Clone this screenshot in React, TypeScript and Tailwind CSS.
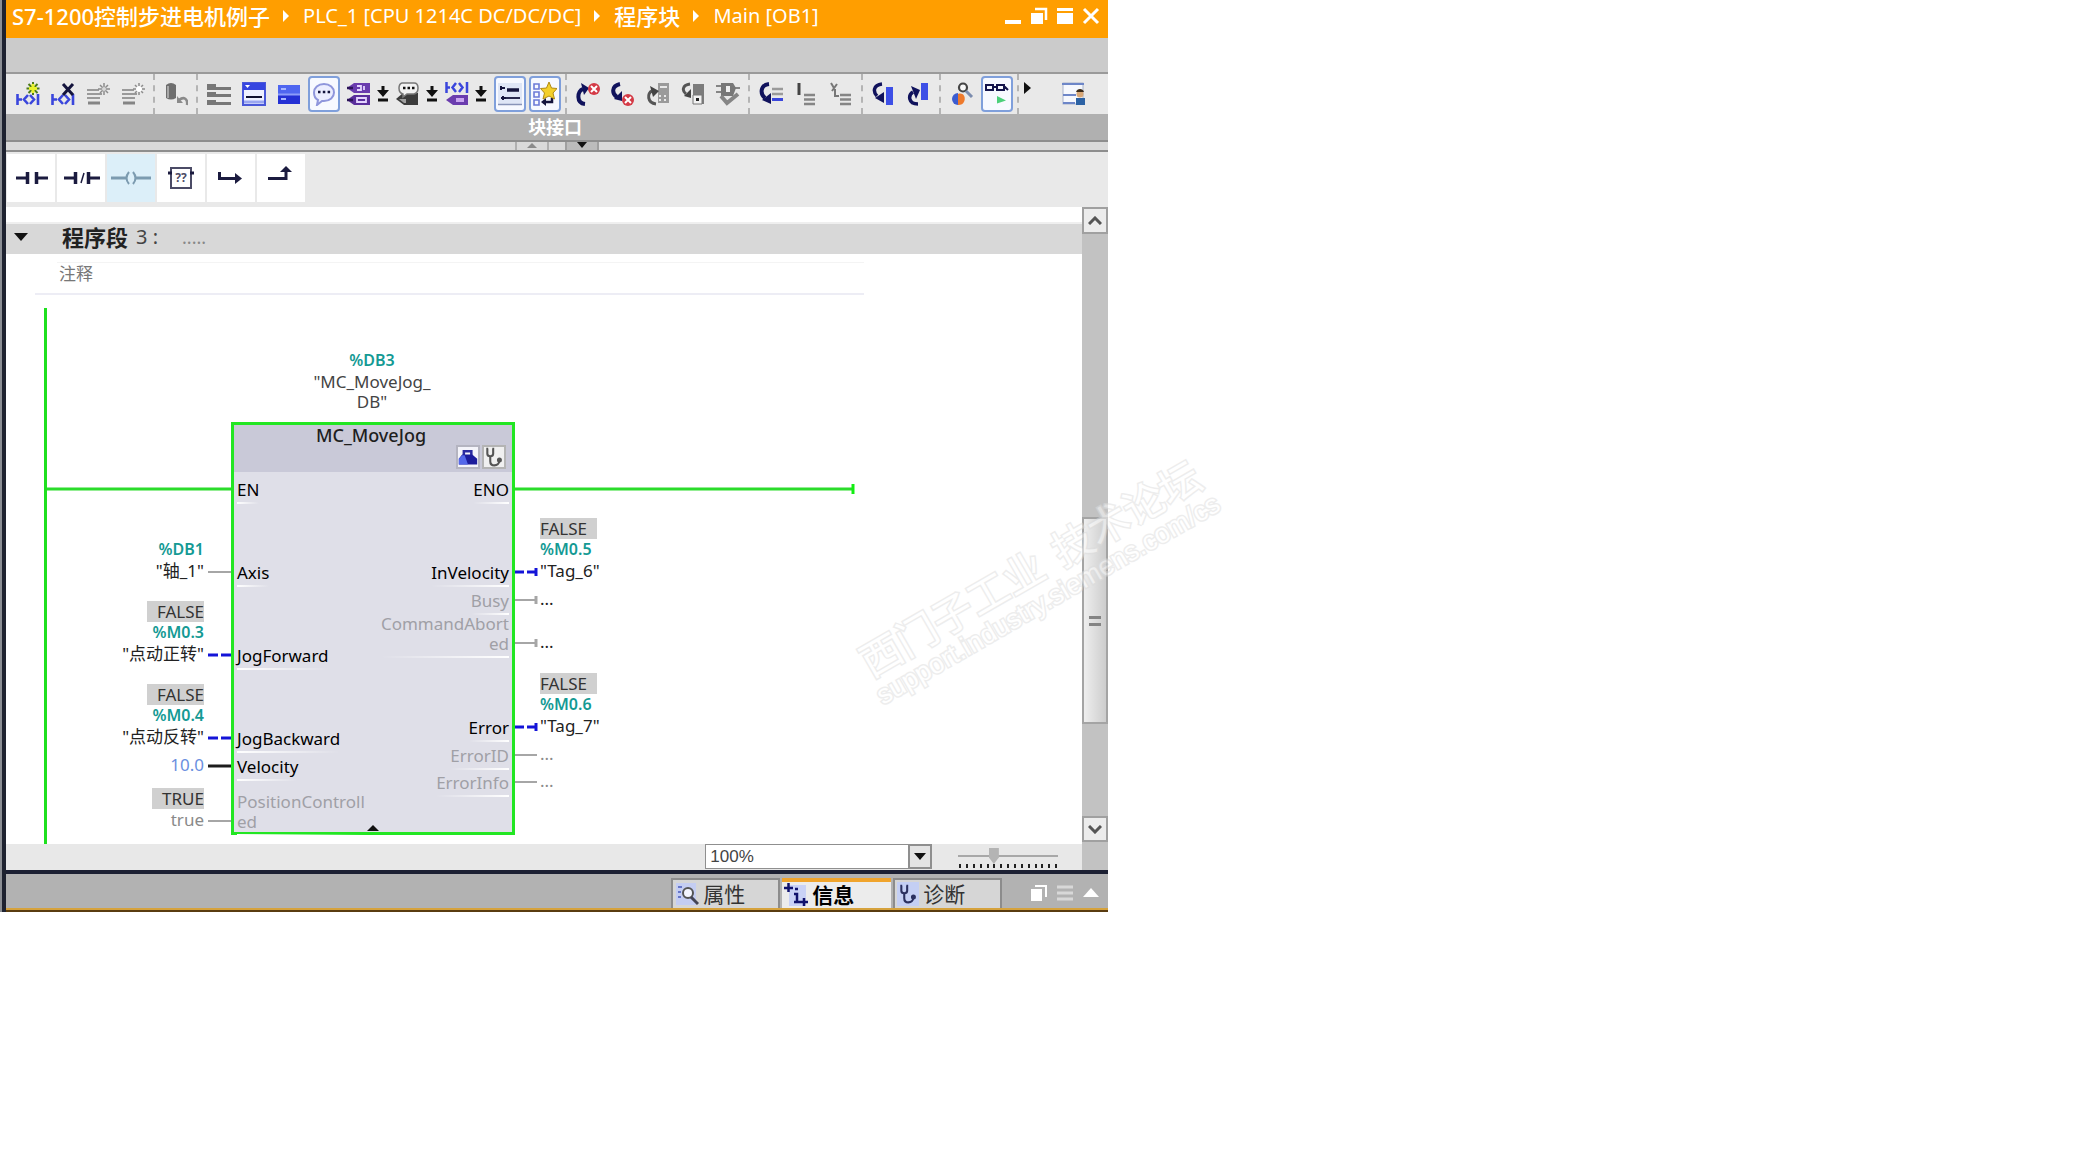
import type { ReactNode } from "react";

type Tone = "normal" | "dim";

type Line = { text: string; kind: "value" | "address" | "tag" | "constant" | "dim" };

type Pin = {
  label: string[];
  y: number;
  tone: Tone;
  wire: "gray" | "black" | "dashed" | "none";
  stop?: boolean;
  lines: Line[];
};

const inputs: Pin[] = [
  { label: ["EN"], y: 193, tone: "normal", wire: "none", lines: [] },
  {
    label: ["Axis"],
    y: 276,
    tone: "normal",
    wire: "gray",
    lines: [
      { text: "%DB1", kind: "address" },
      { text: '"轴_1"', kind: "tag" },
    ],
  },
  {
    label: ["JogForward"],
    y: 359,
    tone: "normal",
    wire: "dashed",
    lines: [
      { text: "FALSE", kind: "value" },
      { text: "%M0.3", kind: "address" },
      { text: '"点动正转"', kind: "tag" },
    ],
  },
  {
    label: ["JogBackward"],
    y: 442,
    tone: "normal",
    wire: "dashed",
    lines: [
      { text: "FALSE", kind: "value" },
      { text: "%M0.4", kind: "address" },
      { text: '"点动反转"', kind: "tag" },
    ],
  },
  {
    label: ["Velocity"],
    y: 470,
    tone: "normal",
    wire: "black",
    lines: [{ text: "10.0", kind: "constant" }],
  },
  {
    label: ["PositionControll", "ed"],
    y: 525,
    tone: "dim",
    wire: "gray",
    lines: [
      { text: "TRUE", kind: "value" },
      { text: "true", kind: "dim" },
    ],
  },
];

const outputs: Pin[] = [
  { label: ["ENO"], y: 193, tone: "normal", wire: "none", lines: [] },
  {
    label: ["InVelocity"],
    y: 276,
    tone: "normal",
    wire: "dashed",
    stop: true,
    lines: [
      { text: "FALSE", kind: "value" },
      { text: "%M0.5", kind: "address" },
      { text: '"Tag_6"', kind: "tag" },
    ],
  },
  { label: ["Busy"], y: 304, tone: "dim", wire: "gray", stop: true, lines: [{ text: "...", kind: "tag" }] },
  {
    label: ["CommandAbort", "ed"],
    y: 347,
    tone: "dim",
    wire: "gray",
    stop: true,
    lines: [{ text: "...", kind: "tag" }],
  },
  {
    label: ["Error"],
    y: 431,
    tone: "normal",
    wire: "dashed",
    stop: true,
    lines: [
      { text: "FALSE", kind: "value" },
      { text: "%M0.6", kind: "address" },
      { text: '"Tag_7"', kind: "tag" },
    ],
  },
  { label: ["ErrorID"], y: 459, tone: "dim", wire: "gray", lines: [{ text: "...", kind: "dim" }] },
  { label: ["ErrorInfo"], y: 486, tone: "dim", wire: "gray", lines: [{ text: "...", kind: "dim" }] },
];

const lineClass: Record<Line["kind"], string> = {
  value: "bg-[#d0d0d0] text-[#333]",
  address: "text-base font-semibold text-[#149a94]",
  tag: "text-[#222]",
  constant: "text-[#6a8fe0]",
  dim: "text-[#8a8a8a]",
};

const wireColor = { gray: "#a6a6a6", black: "#1c1c1c", dashed: "#1414d8", none: "none" };

const NAVY = "#10125c";
const BLUE = "#3a46dc";
const GRAY = "#858585";

function Svg({ children, size = 24 }: { children: ReactNode; size?: number }) {
  return (
    <svg width={size} height={size} viewBox="0 0 24 24" fill="none" aria-hidden="true" className="shrink-0">
      {children}
    </svg>
  );
}

/* ---------- toolbar drawings ---------- */

function Network() {
  return (
    <g stroke={BLUE} strokeWidth="2.6">
      <path d="M1.500 12v11M1 17.500h5M12 13l-4 4.500 4 4.500M14 13l4 4.500-4 4.500M22 12v11" />
    </g>
  );
}

const InsertNetwork = () => (
  <Svg>
    <Network />
    <path d="M17 0v13M10.500 6.500h13M12.500 2l9 9M21.500 2l-9 9" stroke="#4d7a1c" strokeWidth="2" />
    <path d="M17 2v9M13 6.500h8" stroke="#e8f22c" strokeWidth="3" />
  </Svg>
);

const DeleteNetwork = () => (
  <Svg>
    <Network />
    <path d="M12 2l10 11M22 2L12 13" stroke="#14143c" strokeWidth="3" />
  </Svg>
);

const InsertRow = ({ open = false }: { open?: boolean }) => (
  <Svg>
    <path d="M1 8h12M1 12h15M1 16h13" stroke="#9a9a9a" strokeWidth="2.2" />
    <path d="M2 21h12" stroke={GRAY} strokeWidth="3" />
    <path d="M18 1v12M12 7h12M14 3l8 8M22 3l-8 8" stroke="#8c8c8c" strokeWidth="1.500" />
    <circle cx="18" cy="7" r={open ? 3 : 2} fill={open ? "#fff" : "#d8d8d8"} />
  </Svg>
);

const ResetValues = () => (
  <Svg>
    <path d="M2 3q5-4 10 0v13q-5 3-10 0z" fill="#6e6e6e" />
    <path d="M4 4v12" stroke="#a8a8a8" strokeWidth="2" />
    <path d="M15 18c5-4 9-1 8 5" stroke="#8a8a8a" strokeWidth="2.500" />
    <path d="M13 14v7h6z" fill="#8a8a8a" />
  </Svg>
);

const FolderList = () => (
  <Svg>
    <path d="M0 2h9v3h15v3H0zM0 10h9v2h15v3H0zM0 18h9v2h15v3H0z" fill="#777" />
  </Svg>
);

const OpenAll = () => (
  <Svg>
    <rect x="1" y="1" width="22" height="22" fill="#eef0ff" stroke="#4a58d8" strokeWidth="2" />
    <path d="M1 1h22v7H1z" fill="#3545e0" />
    <path d="M3 3h5l-2.500 3z" fill="#fff" />
    <path d="M4 15h16" stroke="#101030" strokeWidth="2" />
    <path d="M2 20h20" stroke="#9aa6f0" strokeWidth="3" />
  </Svg>
);

const CloseAll = () => (
  <Svg>
    <path d="M1 3h22v9H1z" fill="#4f66f0" />
    <path d="M1 12h22v10H1z" fill="#2430d4" />
    <path d="M1 12.500h22" stroke="#8c9cf8" strokeWidth="2" />
    <path d="M4 7h5M4 17h5" stroke="#a8b6ff" strokeWidth="2" />
  </Svg>
);

const Comments = () => (
  <Svg>
    <path
      d="M12 2c6 0 10 4 10 8.500S18 19 12 19l-2 0-5 4 1-5C3 16.500 2 13.500 2 10.500 2 6 6 2 12 2z"
      fill="#eceeff"
      stroke="#8f96dc"
      strokeWidth="2"
    />
    <path d="M6 10h2.500M10.800 10h2.500M15.600 10h2.500" stroke="#14143c" strokeWidth="2.500" />
  </Svg>
);

const Operands = () => (
  <Svg>
    <path d="M0 6l7-5h16v10H7z" fill="#6a3cae" />
    <path d="M0 18l7-5h16v10H7z" fill="#5a2e9c" />
    <path d="M0 6h6M0 18h6" stroke="#2c1458" strokeWidth="2.500" />
    <path d="M10 4h4v4h-4M17 4v4M10 16h9v4h-9z" stroke="#e4d4ff" strokeWidth="1.800" />
  </Svg>
);

const OperandComment = () => (
  <Svg>
    <path d="M0 17l7-6h15v12H8z" fill="#3c3c3c" />
    <path d="M3 17h7v4H8z" fill="#a0a0a0" />
    <path d="M6 1h12q4 0 4 5t-4 6H11l-4 3v-3q-4-1-4-6 0-4 3-5z" fill="#f2f2f2" stroke="#777" strokeWidth="1.500" />
    <path d="M7 6h2.500M11.500 6H14M16 6h2.500" stroke="#111" strokeWidth="2.500" />
  </Svg>
);

const NetworkTag = () => (
  <Svg>
    <path d="M1.500 0v11M1 5.500h4M11 1L7.500 5.500 11 10M14 1l3.500 4.500L14 10M22 0v11" stroke={BLUE} strokeWidth="2.500" />
    <path d="M1 18l7-5h15v10H8z" fill="#6a3cae" />
    <path d="M11 16h8v4h-8z" fill="#c8a4f0" />
  </Svg>
);

const FreeForm = () => (
  <Svg>
    <rect x="0" y="1" width="24" height="22" fill="#dfe6f6" />
    <path d="M0 22.500h24" stroke="#8894b8" strokeWidth="1.500" />
    <path d="M3 4v4M3 6h4M5 14v4M3 16h5" stroke="#14143c" strokeWidth="2" />
    <path d="M9 8h12" stroke="#14143c" strokeWidth="3.500" />
    <path d="M8 16h14" stroke="#14143c" strokeWidth="1.800" />
  </Svg>
);

const Favorites = () => (
  <Svg>
    <path d="M1 2h5v5H1zM1 10h5v5H1zM1 18h5v5H1z" stroke="#6c7bd8" strokeWidth="1.600" />
    <path d="M10 20h9v-4" stroke="#14143c" strokeWidth="2.500" />
    <path d="M8 20l5-4v8z" fill="#14143c" />
    <path d="M16 0l2.500 6 5.500.500-4 4.500 1.500 6L16 14l-6 3 1.500-6-4-4.500L13.500 6z" fill="#f3cf2b" stroke="#b18a14" />
  </Svg>
);

const RedX = ({ x, y }: { x: number; y: number }) => (
  <g>
    <circle cx={x} cy={y} r="6" fill="#d43a46" />
    <path d={`M${x - 3} ${y - 3}l6 6M${x + 3} ${y - 3}l-6 6`} stroke="#fff" strokeWidth="2" />
  </g>
);

const PrevError = () => (
  <Svg>
    <path d="M9 22C0 21 1 9 7 7" stroke={NAVY} strokeWidth="4" />
    <path d="M5 1l8 5-5 7z" fill={NAVY} />
    <RedX x={18} y={7} />
  </Svg>
);

const NextError = () => (
  <Svg>
    <path d="M9 2C0 4 1 12 6 15" stroke={NAVY} strokeWidth="4" />
    <path d="M11 9v10l-8-2z" fill={NAVY} />
    <RedX x={17} y={18} />
  </Svg>
);

const UpdateCalls = () => (
  <Svg>
    <path d="M12 1h11v20H12z" fill="#9a9a9a" />
    <path d="M13 14h2M18 14h2M13 18h2M18 18h2M14 5h7" stroke="#e8e8e8" strokeWidth="2" />
    <path d="M10 22C1 21 1 11 6 9" stroke="#555" strokeWidth="3" />
    <path d="M4 4l9 5-6 6z" fill="#444" />
  </Svg>
);

const SyncBlock = () => (
  <Svg>
    <path d="M12 2h11v20H12z" fill="#7c7c7c" />
    <path d="M12 13h9v9h-9z" fill="#f2f2f2" stroke="#777" />
    <path d="M15 17.500h3" stroke="#222" strokeWidth="3" />
    <path d="M9 2C1 3 1 9 5 12" stroke="#555" strokeWidth="3" />
    <path d="M10 7v9l-7-2z" fill="#444" />
  </Svg>
);

const Consistency = () => (
  <Svg>
    <path d="M0 4h6M0 10h6M18 6h6" stroke={GRAY} strokeWidth="2" />
    <path d="M5 1h12l3 5-3 8H5z" fill="#777" />
    <path d="M10 4h4v6h-4z" fill="#f0f0f0" />
    <path d="M5 14l6 7 11-9" stroke={GRAY} strokeWidth="4" />
  </Svg>
);

const GotoNetwork = () => (
  <Svg>
    <path d="M10 2C1 3 1 12 6 16" stroke={NAVY} strokeWidth="4" />
    <path d="M12 11v11l-9-4z" fill={NAVY} />
    <path d="M13 7h11M13 12h11" stroke="#9a9a9a" strokeWidth="2.500" />
    <path d="M13 17.500h11" stroke={BLUE} strokeWidth="3" />
  </Svg>
);

const StepDown = () => (
  <Svg>
    <path d="M5 1v12" stroke="#444" strokeWidth="3" />
    <path d="M10 13h11M10 17.500h11M10 22h11" stroke={GRAY} strokeWidth="2.500" />
  </Svg>
);

const StepSlash = () => (
  <Svg>
    <path d="M2 1l3 5M8 2L3 9M6 7v7h4" stroke="#777" strokeWidth="2" />
    <path d="M11 13h11M11 17.500h11M11 22h11" stroke={GRAY} strokeWidth="2.500" />
  </Svg>
);

const JumpIn = () => (
  <Svg>
    <path d="M14 5h7v18h-7z" fill="#3d4fe6" />
    <path d="M10 2C1 3 1 10 5 14" stroke={NAVY} strokeWidth="3.500" />
    <path d="M12 10v11l-9-5z" fill={NAVY} />
  </Svg>
);

const JumpOut = () => (
  <Svg>
    <path d="M14 1h7v17h-7z" fill="#3d4fe6" />
    <path d="M11 22C1 22 1 13 6 10" stroke={NAVY} strokeWidth="3.500" />
    <path d="M4 4l9 4-4 9z" fill={NAVY} />
  </Svg>
);

const Compare = () => (
  <Svg>
    <circle cx="13" cy="5.500" r="4" stroke="#444" strokeWidth="2.200" fill="#f8f8f8" />
    <path d="M16 9l6 6" stroke="#7b8cae" strokeWidth="3" />
    <path d="M8 11a6 6 0 0 0 0 12z" fill="#3c5cd0" />
    <path d="M8 12c9-3 9 12 0 11z" fill="#ee7a2c" />
  </Svg>
);

const Monitor = () => (
  <Svg>
    <path d="M1 3h7v5H1zM12 3h7v5h-7zM8 5h4M19 4l4 4" stroke="#14144c" strokeWidth="2" />
    <path d="M12 14l9 4.500-9 3z" fill="#4cd07a" />
  </Svg>
);

const Layout = () => (
  <Svg>
    <rect x="1" y="1" width="20" height="21" fill="#f6f8fd" stroke="#a9b4cc" />
    <path d="M0 2h22M1 13h13M1 21h12" stroke="#6d86c8" strokeWidth="2" />
    <circle cx="18" cy="12" r="3.500" fill="#d9a877" />
    <path d="M14 10c1-4 7-4 8 0z" fill="#3a2a18" />
    <path d="M14 16h9v7h-9z" fill="#2c62a4" />
  </Svg>
);

function Tool({ label, pressed, children }: { label: string; pressed?: boolean; children: ReactNode }) {
  return (
    <button type="button" aria-label={label} title={label} className="flex h-9 w-[35px] shrink-0 justify-center">
      <span
        className={
          pressed
            ? "flex h-9 w-8 items-center justify-center rounded-sm border-2 border-[#7f9fdb] bg-[#f7f9ff]"
            : "flex h-9 w-8 items-center justify-center"
        }
      >
        {children}
      </span>
    </button>
  );
}

function Drop({ label }: { label: string }) {
  return (
    <button type="button" aria-label={label} className="flex h-9 w-3.5 shrink-0 items-center justify-center">
      <svg width="12" height="16" viewBox="0 0 12 16" aria-hidden="true">
        <path d="M4.500 0h3v4H12L6 11 0 4h4.500zM1 12.500h10v3H1z" fill="#111" />
      </svg>
    </button>
  );
}

function Sep() {
  return (
    <span className="flex w-2 shrink-0 justify-center self-stretch">
      <span className="border-l-2 border-dashed border-[#b4b4b4]" />
    </span>
  );
}

function Toolbar() {
  return (
    <div className="flex h-10 items-center overflow-hidden bg-[#e9e9e9] pl-1">
      <Tool label="插入程序段"><InsertNetwork /></Tool>
      <Tool label="删除程序段"><DeleteNetwork /></Tool>
      <Tool label="插入行"><InsertRow /></Tool>
      <Tool label="添加行"><InsertRow open /></Tool>
      <Sep />
      <Tool label="复位起始值"><ResetValues /></Tool>
      <Sep />
      <Tool label="接口列表"><FolderList /></Tool>
      <Tool label="打开所有程序段"><OpenAll /></Tool>
      <Tool label="关闭所有程序段"><CloseAll /></Tool>
      <Tool label="程序段注释" pressed><Comments /></Tool>
      <Tool label="操作数"><Operands /></Tool>
      <Drop label="操作数选项" />
      <Tool label="操作数注释"><OperandComment /></Tool>
      <Drop label="注释选项" />
      <Tool label="变量信息"><NetworkTag /></Tool>
      <Drop label="变量选项" />
      <span className="w-1 shrink-0" />
      <Tool label="自由格式" pressed><FreeForm /></Tool>
      <Tool label="收藏夹" pressed><Favorites /></Tool>
      <Sep />
      <Tool label="上一个错误"><PrevError /></Tool>
      <Tool label="下一个错误"><NextError /></Tool>
      <Tool label="更新块调用"><UpdateCalls /></Tool>
      <Tool label="同步"><SyncBlock /></Tool>
      <Tool label="一致性检查"><Consistency /></Tool>
      <Sep />
      <Tool label="转到程序段"><GotoNetwork /></Tool>
      <Tool label="向下"><StepDown /></Tool>
      <Tool label="返回"><StepSlash /></Tool>
      <Sep />
      <Tool label="跳入"><JumpIn /></Tool>
      <Tool label="跳出"><JumpOut /></Tool>
      <Sep />
      <Tool label="比较"><Compare /></Tool>
      <Tool label="启用监视" pressed><Monitor /></Tool>
      <Sep />
      <button type="button" aria-label="更多" className="mb-3 shrink-0">
        <svg width="10" height="12" viewBox="0 0 10 12" aria-hidden="true">
          <path d="M2 0l7 6-7 6z" fill="#111" />
        </svg>
      </button>
      <span className="w-6 shrink-0" />
      <Tool label="布局"><Layout /></Tool>
    </div>
  );
}

/* ---------- title bar ---------- */

function Crumb({ children }: { children: ReactNode }) {
  return (
    <a href="#" className="whitespace-nowrap">
      {children}
    </a>
  );
}

function Caret() {
  return (
    <svg width="7" height="12" viewBox="0 0 7 12" aria-hidden="true" className="shrink-0">
      <path d="M0 0l6 6-6 6z" fill="#fff" />
    </svg>
  );
}

function TitleBar() {
  return (
    <header className="flex h-[38px] items-center overflow-hidden bg-[#ff9e00] pr-2 pl-1.5 pb-1.5 text-xl text-white">
      <nav aria-label="路径" className="flex items-center gap-[13px]">
        <Crumb>
          <span className="text-[22px] font-medium">S7-1200控制步进电机例子</span>
        </Crumb>
        <Caret />
        <Crumb>PLC_1 [CPU 1214C DC/DC/DC]</Crumb>
        <Caret />
        <Crumb>
          <span className="text-[22px] font-medium">程序块</span>
        </Crumb>
        <Caret />
        <Crumb>Main [OB1]</Crumb>
      </nav>
      <div className="ml-auto flex items-center gap-2">
        <button type="button" aria-label="最小化">
          <svg width="18" height="20" viewBox="0 0 18 20"><path d="M1 14h16v4H1z" fill="#fff" /></svg>
        </button>
        <button type="button" aria-label="还原">
          <svg width="18" height="20" viewBox="0 0 18 20">
            <path d="M1 7h12v11H1z" fill="#fff" />
            <path d="M5 3h11v11" fill="none" stroke="#fff" strokeWidth="2.500" />
          </svg>
        </button>
        <button type="button" aria-label="最大化">
          <svg width="18" height="20" viewBox="0 0 18 20">
            <path d="M1 2h16v3H1zM1 7h16v11H1z" fill="#fff" />
          </svg>
        </button>
        <button type="button" aria-label="关闭">
          <svg width="18" height="20" viewBox="0 0 18 20">
            <path d="M2 3l14 14M16 3L2 17" stroke="#fff" strokeWidth="3" />
          </svg>
        </button>
      </div>
    </header>
  );
}

/* ---------- favourites ---------- */

const INK = "#1b1b3f";

function Fav({ label, active, children }: { label: string; active?: boolean; children: ReactNode }) {
  return (
    <button
      type="button"
      aria-label={label}
      className={
        active
          ? "flex h-12 w-12 items-center justify-center bg-[#dceff9]"
          : "flex h-12 w-12 items-center justify-center bg-white"
      }
    >
      <svg width="42" height="28" viewBox="0 0 42 28" fill="none" aria-hidden="true">
        {children}
      </svg>
    </button>
  );
}

function FavoritesBar() {
  return (
    <div className="flex gap-0.5 bg-[#e9e9e9] pr-0.5 pl-px pt-0.5 pb-[5px]">
      <Fav label="常开触点">
        <path d="M6 14h11M27 14h11" stroke={INK} strokeWidth="3" />
        <path d="M17.500 8v12M26.500 8v12" stroke={INK} strokeWidth="3.500" />
      </Fav>
      <Fav label="常闭触点">
        <path d="M4 14h11M29 14h11" stroke={INK} strokeWidth="3" />
        <path d="M15.500 8v12M28.500 8v12" stroke={INK} strokeWidth="3.500" />
        <path d="M24 9l-3 10" stroke={INK} strokeWidth="1.500" />
      </Fav>
      <Fav label="线圈" active>
        <path d="M1 14h15M26 14h15" stroke="#7c9bb0" strokeWidth="3" />
        <path d="M19 8q-5 6 0 12M23 8q5 6 0 12" stroke="#7c9bb0" strokeWidth="2" />
      </Fav>
      <Fav label="空功能框">
        <path d="M11 4h20v20H11z" stroke="#4b4b66" strokeWidth="2" />
        <path d="M8 9h4M30 9h4" stroke={INK} strokeWidth="3" />
        <text x="21" y="18" textAnchor="middle" fontSize="12" fontWeight="700" fill="#4b4b66">
          ??
        </text>
      </Fav>
      <Fav label="打开分支">
        <path d="M9.500 8v6.500H27" stroke={INK} strokeWidth="3" />
        <path d="M25 9l7 5.500-7 5.500z" fill={INK} />
      </Fav>
      <Fav label="嵌套闭合">
        <path d="M8 14.500h18V7" stroke={INK} strokeWidth="3" />
        <path d="M20 8l6-6 6 6z" fill={INK} />
      </Fav>
    </div>
  );
}

/* ---------- ladder network ---------- */

function PinLabel({ pin, side }: { pin: Pin; side: "in" | "out" }) {
  return (
    <div
      className={
        side === "in"
          ? "absolute left-[231px] flex flex-col"
          : "absolute left-[353px] flex w-[150px] flex-col items-end text-right"
      }
      style={{ top: pin.y + 11 - pin.label.length * 20 }}
    >
      <div className={pin.tone === "dim" ? "leading-5 text-[#a0a0a6]" : "leading-5 text-black"}>
        {pin.label.map((part) => (
          <div key={part}>{part}</div>
        ))}
        <div
          className={
            side === "in"
              ? "mt-0.5 h-0.5 bg-linear-to-r from-white to-transparent"
              : "mt-0.5 h-0.5 bg-linear-to-l from-white to-transparent"
          }
        />
      </div>
    </div>
  );
}

function Operand({ pin, side }: { pin: Pin; side: "in" | "out" }) {
  return (
    <div
      className={
        side === "in"
          ? "absolute left-12 flex w-[150px] flex-col items-end"
          : "absolute left-[534px] flex flex-col items-start"
      }
      style={{ top: pin.y + 9 - pin.lines.length * 21 }}
    >
      {pin.lines.map((line) => (
        <span key={line.text} className={`leading-[21px] whitespace-nowrap ${lineClass[line.kind]}`}>
          {line.kind === "value" ? (
            <span className={side === "in" ? "block pl-2.5" : "block pr-2.5"}>{line.text}</span>
          ) : (
            line.text
          )}
        </span>
      ))}
    </div>
  );
}

function Wires() {
  return (
    <svg width="860" height="548" viewBox="0 0 860 548" fill="none" aria-hidden="true" className="absolute top-0 left-0">
      <path d="M39.500 12v536" stroke="#1fe01f" strokeWidth="3" />
      <path d="M41 193h186M508 193h340" stroke="#2bdc2b" strokeWidth="3" />
      <path d="M847 188v10" stroke="#12ee12" strokeWidth="3" />
      {inputs.map((pin) => (
        <path
          key={pin.label[0]}
          d={`M202 ${pin.y}h24`}
          stroke={wireColor[pin.wire]}
          strokeWidth={pin.wire === "gray" ? 2 : 3}
          strokeDasharray={pin.wire === "dashed" ? "10 3" : undefined}
        />
      ))}
      {outputs.map((pin) => (
        <g key={pin.label[0]} stroke={wireColor[pin.wire]}>
          <path
            d={`M509 ${pin.y}h22`}
            strokeWidth={pin.wire === "gray" ? 2 : 3}
            strokeDasharray={pin.wire === "dashed" ? "9 3" : undefined}
          />
          {pin.stop && <path d={`M530 ${pin.y - 4}v8`} strokeWidth="3" />}
        </g>
      ))}
    </svg>
  );
}

function Ladder() {
  return (
    <div className="relative h-[548px] overflow-hidden text-[17px]">
      <Wires />
      <div className="absolute top-[54px] left-[291px] w-[150px] text-center leading-5 text-[#444]">
        <div className="mb-0.5 text-base leading-5 font-semibold text-[#149a94]">%DB3</div>
        <div>"MC_MoveJog_</div>
        <div>DB"</div>
      </div>
      <section
        aria-label="MC_MoveJog"
        className="absolute top-[126px] left-[225px] flex h-[413px] w-[284px] flex-col border-[3px] border-[#22e622] bg-[#dfdfe8]"
      >
        <div className="h-[47px] bg-[#c9c9d8] text-center">
          <h2 className="pr-1 text-lg leading-5 font-medium text-[#1e1e1e]">MC_MoveJog</h2>
          <div className="flex justify-end gap-0.5 pr-1.5">
            <button type="button" aria-label="组态" className="flex size-6 items-center justify-center border-2 border-[#b4b4c0] bg-[#f4f4fa]">
              <Svg size={20}>
                <path d="M7 10V5h9v5" stroke="#2a2aa0" strokeWidth="3" />
                <path d="M1 14l4-5h12l6 5v7H1z" fill="#1c1c9c" />
                <path d="M1 14l4-4h3l4 11H1z" fill="#5468ea" />
              </Svg>
            </button>
            <button type="button" aria-label="诊断" className="flex size-6 items-center justify-center border-2 border-[#b4b4b4] bg-[#f0f0f0]">
              <Stethoscope color="#555" />
            </button>
          </div>
        </div>
        <button type="button" aria-label="折叠" className="mx-auto mt-auto">
          <svg width="12" height="7" viewBox="0 0 12 7"><path d="M0 6l6-6 6 6z" fill="#111" /></svg>
        </button>
      </section>
      {inputs.map((pin) => (
        <PinLabel key={pin.label[0]} pin={pin} side="in" />
      ))}
      {outputs.map((pin) => (
        <PinLabel key={pin.label[0]} pin={pin} side="out" />
      ))}
      {inputs.map((pin) => (
        <Operand key={pin.label[0]} pin={pin} side="in" />
      ))}
      {outputs.map((pin) => (
        <Operand key={pin.label[0]} pin={pin} side="out" />
      ))}
    </div>
  );
}

function Stethoscope({ color }: { color: string }) {
  return (
    <Svg size={20}>
      <path d="M5 2H4v6q0 3 3.500 3T11 8V2h-1" stroke={color} strokeWidth="2.500" />
      <path d="M7.500 11v6q0 5 5 5t6-5" stroke={color} strokeWidth="2.500" />
      <circle cx="18.500" cy="15.500" r="3" fill={color} />
    </Svg>
  );
}

/* ---------- scroll bar and status row ---------- */

function ScrollBar() {
  return (
    <div className="flex w-[26px] shrink-0 flex-col bg-[#c2c2c2] pb-7">
      <button type="button" aria-label="向上滚动" className="flex h-[27px] items-center justify-center border-2 border-[#a0a0a0] bg-[#ececec]">
        <svg width="14" height="9" viewBox="0 0 14 9" fill="none"><path d="M1 8l6-6 6 6" stroke="#555" strokeWidth="3" /></svg>
      </button>
      <div className="flex flex-1 flex-col">
        <div className="flex-[286]" />
        <div className="flex flex-[205] flex-col items-center justify-center gap-1 border-2 border-[#a4a4a4] bg-linear-to-r from-[#eeeeee] to-[#cdcdcd]">
          <span className="h-[3px] w-3 bg-[#848484]" />
          <span className="h-[3px] w-3 bg-[#848484]" />
        </div>
        <div className="flex-[93]" />
      </div>
      <button type="button" aria-label="向下滚动" className="flex h-[26px] items-center justify-center border-2 border-[#a0a0a0] bg-[#ececec]">
        <svg width="14" height="9" viewBox="0 0 14 9" fill="none"><path d="M1 1l6 6 6-6" stroke="#555" strokeWidth="3" /></svg>
      </button>
    </div>
  );
}

function StatusRow() {
  return (
    <div className="flex h-[26px] items-start justify-end bg-[#e8e8e8] pr-6">
      <label className="grid w-[227px]">
        <span className="sr-only">缩放</span>
        <select
          defaultValue="100"
          className="col-start-1 row-start-1 h-[25px] appearance-none border border-[#8f8f8f] bg-white px-1 font-['Liberation_Sans',sans-serif] text-[17px] leading-[23px] text-[#444]"
        >
          <option value="50">50%</option>
          <option value="100">100%</option>
          <option value="200">200%</option>
        </select>
        <span className="pointer-events-none col-start-1 row-start-1 flex h-[25px] w-6 items-center justify-center justify-self-end border-2 border-[#8f8f8f] bg-[#e4e4e4]">
          <svg width="12" height="7" viewBox="0 0 12 7"><path d="M0 0h12L6 7z" fill="#111" /></svg>
        </span>
      </label>
      <div className="ml-[26px] flex w-[100px] flex-col">
        <input
          type="range"
          aria-label="缩放滑块"
          min="0"
          max="100"
          defaultValue="34"
          className="mt-1 h-4 w-full appearance-none bg-[linear-gradient(#a8a8a8,#a8a8a8)] bg-size-[100%_2px] bg-center bg-no-repeat [&::-webkit-slider-thumb]:h-4 [&::-webkit-slider-thumb]:w-2.5 [&::-webkit-slider-thumb]:appearance-none [&::-webkit-slider-thumb]:bg-[#b4b4b4] [&::-webkit-slider-thumb]:[clip-path:polygon(0_0,100%_0,100%_60%,50%_100%,0_60%)]"
        />
        <div className="flex justify-between px-px">
          {Array.from({ length: 15 }, (_, i) => (
            <span key={i} className="h-1 w-0.5 bg-[#222]" />
          ))}
        </div>
      </div>
    </div>
  );
}

function Tab({ label, active, icon }: { label: string; active?: boolean; icon: ReactNode }) {
  return (
    <button
      type="button"
      role="tab"
      aria-selected={active ?? false}
      className={
        active
          ? "flex h-[30px] w-[109px] items-center gap-1 border-t-4 border-[#f0a42c] bg-[#ececec] pl-0.5 font-bold text-black"
          : "flex h-[30px] w-[109px] items-center gap-1 border-t-2 border-r-2 border-l-2 border-[#8c8c8c] bg-[#d6d6d6] pl-0.5 text-[#333]"
      }
    >
      {icon}
      <span className="text-[21px] leading-6">{label}</span>
    </button>
  );
}

function Inspector() {
  return (
    <footer className="flex h-[38px] items-end justify-end border-b-2 border-[#5a3c10] bg-[#b2b2b2]">
      <div className="flex w-full items-end justify-end border-b-2 border-[#d6a23c] pr-2">
        <div role="tablist" aria-label="巡视窗口" className="flex gap-0.5">
          <Tab
            label="属性"
            icon={
              <Svg>
                <rect x="1" y="1" width="20" height="22" fill="#c4cdf2" />
                <path d="M3 5h4M3 10h3M3 15h3" stroke="#6676c8" strokeWidth="2" />
                <circle cx="13" cy="11" r="5" stroke="#555" strokeWidth="2" fill="#f3f5ff" />
                <path d="M16 15l7 7" stroke="#445" strokeWidth="3" />
              </Svg>
            }
          />
          <Tab
            label="信息"
            active
            icon={
              <Svg>
                <rect x="5" y="2" width="17" height="21" fill="#c9d2f6" />
                <path d="M0 5h9M4.500 0v9" stroke="#10126c" strokeWidth="2.500" />
                <path d="M11 6h3M10 11h3v7M10 19h6" stroke="#10126c" strokeWidth="2.500" />
                <path d="M16 19h8M20 15v8" stroke="#10126c" strokeWidth="2.500" />
              </Svg>
            }
          />
          <Tab
            label="诊断"
            icon={
              <span className="flex h-6 w-[22px] items-center justify-center bg-[#c4cff4]">
                <Stethoscope color="#2a3060" />
              </span>
            }
          />
        </div>
        <div className="ml-7 flex gap-2 self-center">
          <button type="button" aria-label="浮动">
            <svg width="18" height="20" viewBox="0 0 18 20">
              <path d="M1 6h11v12H1z" fill="#fff" />
              <path d="M5 3h11v11" fill="none" stroke="#fff" strokeWidth="2" />
            </svg>
          </button>
          <button type="button" aria-label="平铺">
            <svg width="18" height="20" viewBox="0 0 18 20">
              <path d="M1 4h16M1 10h16M1 16h16" stroke="#d8d8d8" strokeWidth="3" />
            </svg>
          </button>
          <button type="button" aria-label="展开">
            <svg width="18" height="20" viewBox="0 0 18 20">
              <path d="M1 14l8-9 8 9z" fill="#fff" />
            </svg>
          </button>
        </div>
      </div>
    </footer>
  );
}

function Watermark() {
  return (
    <div
      aria-hidden="true"
      className="pointer-events-none absolute top-[546px] right-[-130px] flex w-[400px] -rotate-30 flex-col items-center whitespace-nowrap text-white opacity-50 [paint-order:stroke_fill] [-webkit-text-stroke:3px_#dcdcdc]"
    >
      <span className="flex gap-4 text-[41px] leading-10">
        <span>西门子工业</span>
        <span>技术论坛</span>
      </span>
      <span className="font-['Liberation_Sans',sans-serif] text-[27px] leading-8">support.industry.siemens.com/cs</span>
    </div>
  );
}

export default function App() {
  return (
    <main className="min-h-screen bg-white font-['Noto_Sans','Noto_Sans_CJK_SC',sans-serif]">
      <div className="relative flex w-8/15 min-w-[1080px] border-l-2 border-[#8b8e94]">
        <div className="min-w-0 flex-1 border-l-4 border-[#1e2230]">
          <TitleBar />
          <div className="h-9 border-b-2 border-[#9a9a9a] bg-[#cbcbcb]" />
          <Toolbar />
          <h1 className="h-7 border-b-2 border-[#8e8e8e] bg-[#b0b0b0] pr-1 text-center text-lg leading-[26px] font-bold text-white">
            块接口
          </h1>
          <div className="flex h-2.5 justify-center gap-4 border-b-2 border-[#8e8e8e] bg-[#dadada]">
            <button type="button" aria-label="折叠接口" className="flex w-[34px] justify-center border-x-2 border-[#b0b0b0]">
              <svg width="10" height="6" viewBox="0 0 10 6"><path d="M0 6l5-5 5 5z" fill="#8a8a8a" /></svg>
            </button>
            <button type="button" aria-label="展开接口" className="flex w-[34px] justify-center border-x-2 border-[#a0a0a0] bg-[#bcbcbc]">
              <svg width="10" height="6" viewBox="0 0 10 6"><path d="M0 0h10L5 6z" fill="#111" /></svg>
            </button>
          </div>
          <FavoritesBar />
          <div className="flex">
            <div className="min-w-0 flex-1">
              <div className="mt-[15px] flex h-8 items-center border-t-2 border-[#efefef] bg-[#d8d8d8] pb-1 text-xl text-[#444]">
                <button type="button" aria-label="折叠程序段" className="w-7 pl-2">
                  <svg width="14" height="8" viewBox="0 0 14 8"><path d="M0 0h14L7 8z" fill="#111" /></svg>
                </button>
                <h2 className="ml-7 flex items-center gap-2 whitespace-nowrap">
                  <span className="text-[22px] font-bold text-[#222]">程序段</span>
                  <span>3 :</span>
                </h2>
                <span className="ml-6 text-lg text-[#888]">.....</span>
              </div>
              <div className="flex h-[42px] pt-2 pb-px pl-[29px]">
                <div className="w-[829px] border-b-2 border-[#ededf5] pl-[22px]">
                  <input
                    type="text"
                    aria-label="程序段注释"
                    placeholder="注释"
                    className="h-[22px] w-full border-t border-[#f4f4f4] pl-0.5 text-[17px] placeholder:text-[#777]"
                  />
                </div>
              </div>
              <Ladder />
              <StatusRow />
            </div>
            <ScrollBar />
          </div>
          <div className="h-1 bg-[#1c2033]" />
          <Inspector />
        </div>
        <Watermark />
      </div>
    </main>
  );
}
